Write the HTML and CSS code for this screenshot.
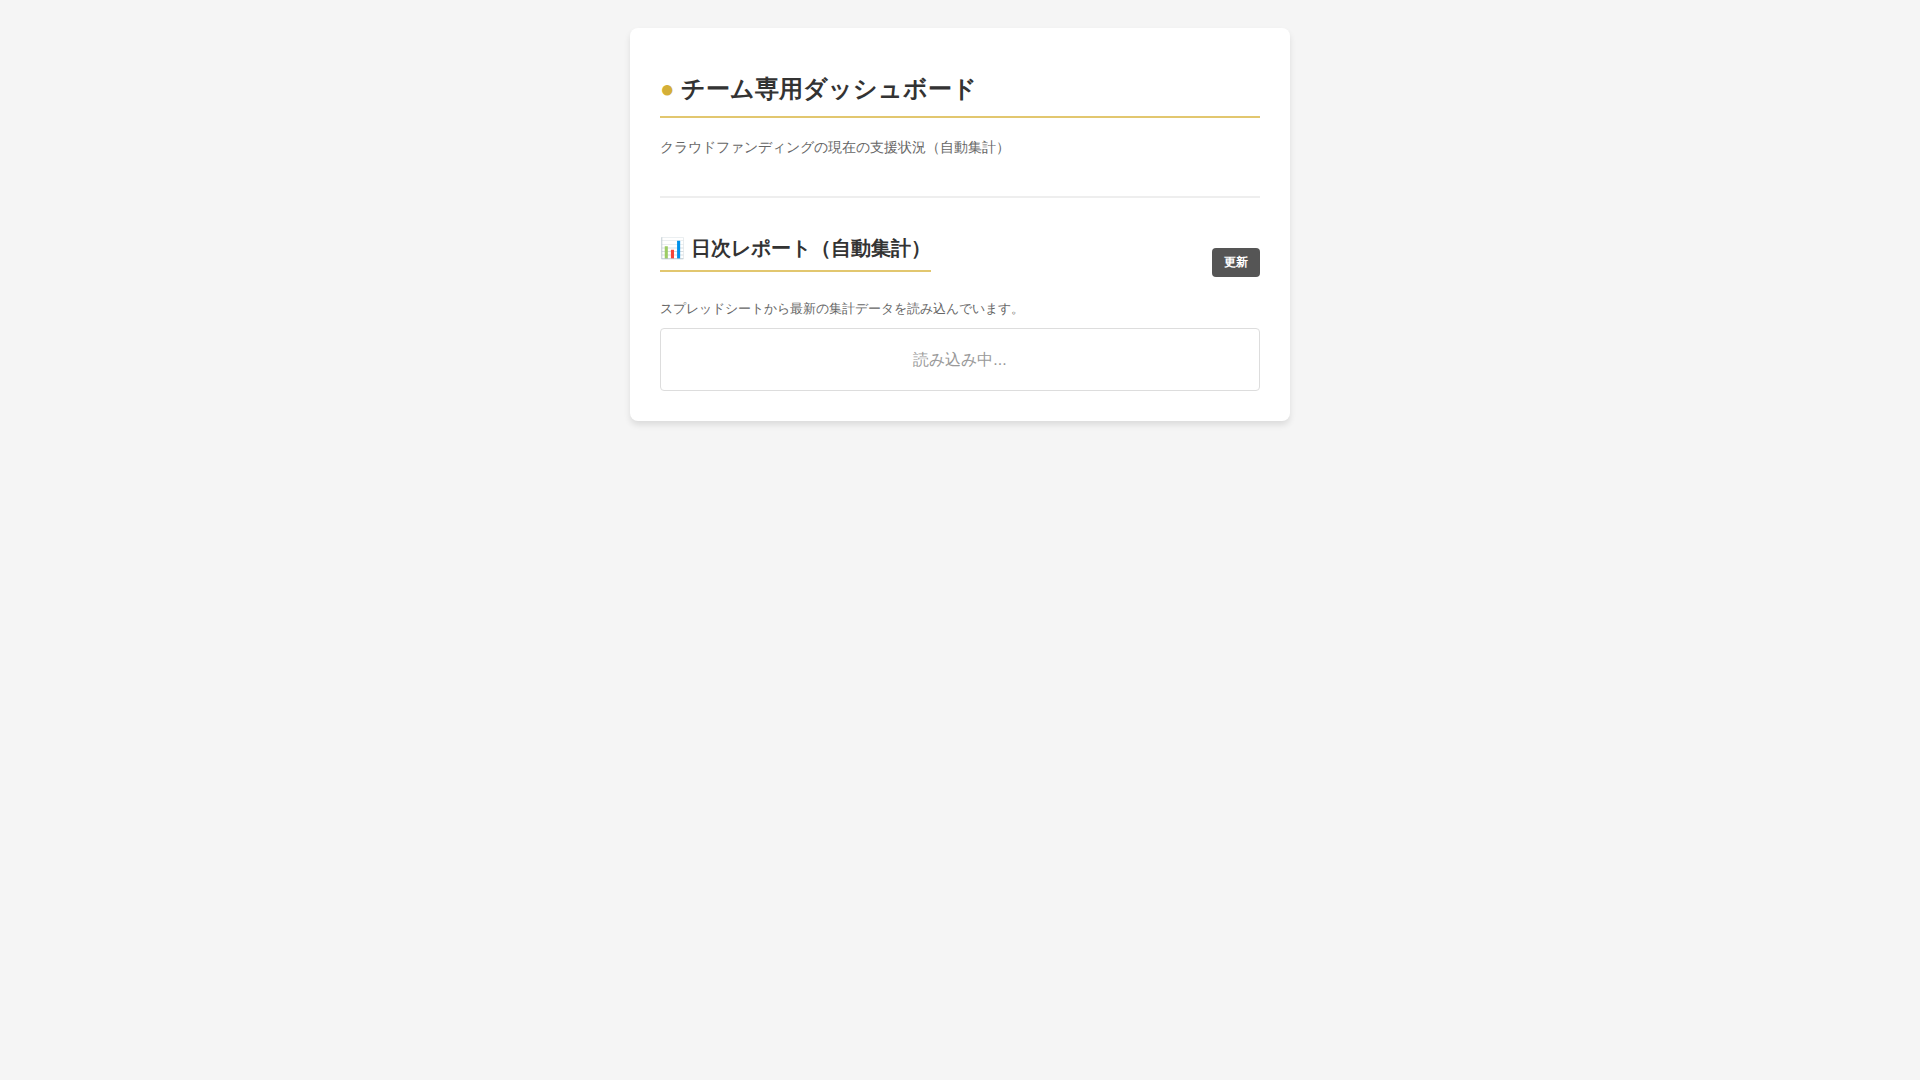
FILE: index.html
```
<!DOCTYPE html>
<html lang="ja">
  <head>
    <meta charset="UTF-8" />
    <meta name="viewport" content="width=device-width, initial-scale=1.0" />
    <title>チーム専用ダッシュボード</title>
    <link rel="stylesheet" href="styles.css">
  </head>
  <body>
    <div class="container">
      <h1><span class="dot">●</span> チーム専用ダッシュボード</h1>
      <p class="lead">クラウドファンディングの現在の支援状況（自動集計）</p>

      <div class="report">
        <div class="report-header">
          <h2>📊 日次レポート（自動集計）</h2>
          <button type="button" class="reload">更新</button>
        </div>
        <p class="note">スプレッドシートから最新の集計データを読み込んでいます。</p>
        <div class="result">読み込み中...</div>
      </div>
    </div>
  </body>
</html>
```
FILE: styles.css
```
body {
  margin: 0;
  padding: 28px 20px;
  background-color: #f5f5f5;
  color: #333;
  font-family: 'Liberation Sans', sans-serif;
  line-height: 26px;
}
.container {
  max-width: 600px;
  margin: 0 auto;
  padding: 30px;
  background: #fff;
  border-radius: 8px;
  box-shadow: 0 4px 6px rgba(0, 0, 0, 0.1);
}
h1,
h2 {
  border-bottom: 2px solid #e2c76f;
}
h1 {
  margin: 12px 0 16px;
  padding-bottom: 8px;
  font-size: 24px;
  line-height: 38px;
}
.dot {
  color: #d4af37;
}
.lead {
  margin: 0;
  color: #666;
  font-size: 14px;
}
.report {
  margin-top: 36px;
  padding-top: 34px;
  border-top: 2px solid #eee;
}
.report-header {
  display: flex;
  justify-content: space-between;
  align-items: center;
  margin-bottom: 4px;
}
h2 {
  margin: 0 0 20px;
  padding-bottom: 6px;
  font-size: 20px;
  line-height: 32px;
}
.reload {
  padding: 7px 12px;
  border: none;
  border-radius: 4px;
  background-color: #555;
  color: #fff;
  font-family: inherit;
  font-size: 12px;
  font-weight: bold;
  line-height: 15px;
  cursor: pointer;
}
.reload:hover {
  background-color: #333;
}
.note {
  margin: 0 0 6px;
  color: #666;
  font-size: 13px;
}
.result {
  padding: 18px;
  border: 1px solid #ddd;
  border-radius: 4px;
  color: #999;
  line-height: 25px;
  text-align: center;
}
```
